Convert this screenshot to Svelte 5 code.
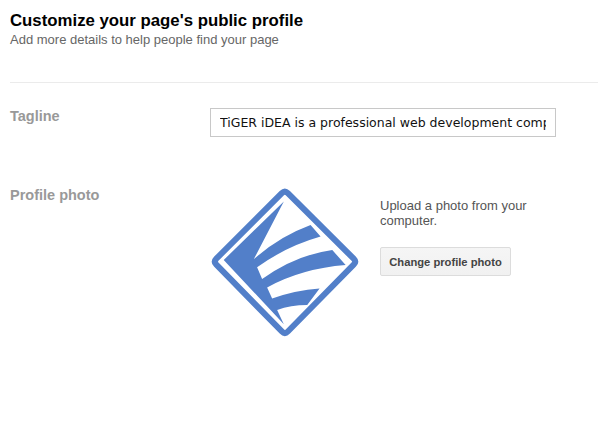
<script>
    let tagline = 'TiGER iDEA is a professional web development company';
</script>

<div class="page">
    <header>
        <h1>Customize your page's public profile</h1>
        <p>Add more details to help people find your page</p>
    </header>

    <div class="row tagline">
        <div class="label">Tagline</div>
        <input type="text" bind:value={tagline} />
    </div>

    <div class="row photo">
        <div class="label">Profile photo</div>
        <svg class="logo" viewBox="37 25 443 445" aria-label="TiGER iDEA logo">
            <path class="frame" d="M249 40 Q258 31 267 40 L464 236 Q473 245 464 254 L267 454 Q258 463 249 454 L53 254 Q44 245 53 236 Z" />
            <path class="mark" d="M75 240 L255 65 L165 238 Q240 170 335 135 L365 170 Q260 200 175 262 L190 297 Q290 225 400 210 L440 255 Q310 265 205 322 L220 355 Q290 330 362 325 L325 375 Q275 375 235 390 L255 432 Z" />
        </svg>
        <div class="upload">
            <p>Upload a photo from your computer.</p>
            <button type="button">Change profile photo</button>
        </div>
    </div>
</div>

<style>
    :global(body) {
        background: #fff;
    }

    .page {
        width: 598px;
        height: 426px;
        box-sizing: border-box;
        padding: 12px 0 0 10px;
        font-family: "Liberation Sans", Arial, sans-serif;
        overflow: hidden;
    }

    header {
        height: 70px;
        border-bottom: 1px solid #ebebeb;
    }

    h1 {
        margin: 0;
        font-size: 16.8px;
        line-height: 18px;
        font-weight: bold;
        color: #000;
    }

    p {
        margin: 0;
        font-size: 13px;
        color: #666;
    }

    header p {
        line-height: 16px;
        margin-top: 2px;
    }

    .row {
        display: flex;
        align-items: flex-start;
    }

    .label {
        width: 200px;
        font-size: 14.5px;
        font-weight: bold;
        color: #999;
        line-height: 16px;
    }

    .tagline {
        margin-top: 25px;
    }

    input {
        width: 346px;
        height: 29px;
        box-sizing: border-box;
        border: 1px solid #c8c8c8;
        padding: 0 9px;
        font-family: "DejaVu Sans", sans-serif;
        font-size: 12.5px;
        color: #111;
        outline: none;
        border-radius: 0;
        background: #fff;
    }

    .photo {
        margin-top: 50px;
    }

    .logo {
        width: 148px;
        height: 149px;
        margin: 1px 0 0 1px;
        flex-shrink: 0;
    }

    .frame {
        fill: none;
        stroke: #527fc9;
        stroke-width: 18;
        stroke-linejoin: round;
    }

    .mark {
        fill: #527fc9;
    }

    .upload {
        margin-left: 21px;
        margin-top: 11px;
        width: 160px;
    }

    .upload p {
        line-height: 15px;
        color: #555;
    }

    button {
        display: block;
        margin-top: 19px;
        width: 131px;
        height: 29px;
        padding: 0;
        border: 1px solid #dcdcdc;
        border-radius: 2px;
        background: linear-gradient(#f5f5f5, #f1f1f1);
        font-family: "Liberation Sans", Arial, sans-serif;
        font-size: 11.2px;
        font-weight: bold;
        color: #444;
    }
</style>
